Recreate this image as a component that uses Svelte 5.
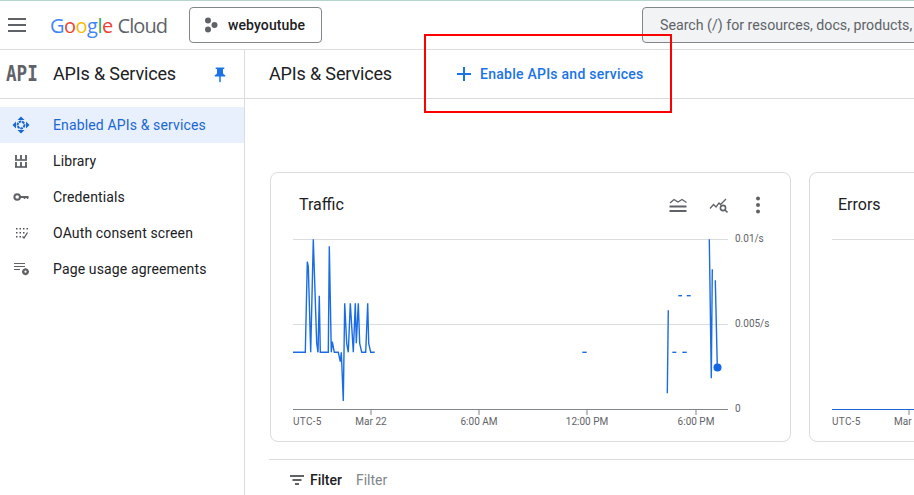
<script>
  const z = (ox, pts) => pts.map(([x, y]) => `${(ox + x / 3).toFixed(1)},${(170 + y / 3).toFixed(1)}`).join(' ');
  const main = z(270, [[69,547],[106,547],[112,275],[115,290],[122,547],[130,208],[140,520],[144,547],[148,377],[151,547],[175,547],[178,229],[184,547],[187,515],[193,547],[205,547],[211,575],[214,547],[220,693],[224,400],[230,520],[235,547],[241,400],[250,547],[256,400],[259,520],[265,400],[269,520],[275,547],[287,547],[293,400],[296,520],[302,547],[314,547]]);
  const segments = [
    [[67,547],[80,547]],
    [[325,421],[322,670]],
    [[355,377],[366,377]],
    [[380,377],[392,377]],
    [[337,547],[349,547]],
    [[367,547],[380,547]],
    [[448,208],[454,625],[457,298]],
    [[466,331],[472,592]]
  ].map((s) => z(560, s));
  const ticks = [
    { x: 371, label: 'Mar 22' },
    { x: 479, label: '6:00 AM' },
    { x: 587, label: '12:00 PM' },
    { x: 696, label: '6:00 PM' }
  ];
  const nav = ['Library', 'Credentials', 'OAuth consent screen', 'Page usage agreements'];
</script>

<div class="page">
  <div class="topline"></div>
  <header class="topbar">
    <svg class="menu" width="18" height="14" viewBox="0 0 18 14"><path d="M0 1h18M0 7h18M0 13h18" stroke="#5f6368" stroke-width="2" /></svg>
    <div class="logo"><span class="b">G</span><span class="r">o</span><span class="y">o</span><span class="b">g</span><span class="g">l</span><span class="r">e</span> <span class="cloud">Cloud</span></div>
    <button class="project">
      <svg width="14" height="16" viewBox="0 0 14 16"><circle cx="4" cy="3.5" r="3" fill="#5f6368" /><circle cx="10.5" cy="8" r="3" fill="#5f6368" /><circle cx="4" cy="12.5" r="3" fill="#5f6368" /></svg>
      <span>webyoutube</span>
    </button>
    <div class="search">Search (/) for resources, docs, products, and more</div>
  </header>

  <div class="body">
    <aside class="side">
      <div class="side-head">
        <span class="api">API</span>
        <span class="title">APIs &amp; Services</span>
        <svg class="pin" width="18" height="18" viewBox="0 0 24 24"><path fill="#1a73e8" d="M16 9V4h1c.55 0 1-.45 1-1s-.45-1-1-1H7c-.55 0-1 .45-1 1s.45 1 1 1h1v5c0 1.66-1.34 3-3 3v2h5.97v7l1 1 1-1v-7H19v-2c-1.66 0-3-1.34-3-3z" /></svg>
      </div>
      <nav>
        <div class="item active">
          <svg width="18" height="18" viewBox="0 0 18 18" fill="#1967d2">
            <path d="M9 .5 12.500 4H5.500zM9 17.500 5.500 14h7zM.5 9 4 5.500v7zM17.500 9 14 12.500v-7z" />
            <circle cx="9" cy="9" r="3.400" fill="none" stroke="#1967d2" stroke-width="2" stroke-dasharray="2.600 .74" />
          </svg>
          <span>Enabled APIs &amp; services</span>
        </div>
        {#each nav as label, i}
          <div class="item">
            {#if i === 0}
              <svg width="18" height="18" viewBox="0 0 18 18"><path d="M4 3v4.500M9 3v4.500M14 3v4.500M4 10v5M9 10v5M14 10v5" stroke="#4f5358" stroke-width="1.700" /><path d="M3 8h12M3 15h12" stroke="#4f5358" stroke-width="1.500" /></svg>
            {:else if i === 1}
              <svg width="18" height="18" viewBox="0 0 18 18"><circle cx="5.200" cy="9" r="2.800" fill="none" stroke="#5f6368" stroke-width="2" /><path d="M8 9h8.500" stroke="#5f6368" stroke-width="2" /><path d="M12.500 9v2M15.500 9v2" stroke="#5f6368" stroke-width="1.500" /></svg>
            {:else if i === 2}
              <svg width="18" height="18" viewBox="0 0 18 18" fill="#4f5358"><path d="M4 4h1.500v1.500H4zM7.500 4H9v1.500H7.500zM11 4h1.500v1.500H11zM14.500 4H16v1.500h-1.500zM4 8h1.500v1.500H4zM7.500 8H9v1.500H7.500zM11 8h1.500v1.500H11zM4 12h1.500v1.500H4zM7.500 12H9v1.500H7.500z" /><path d="M10.500 12.500 12 14 15.500 8.500" fill="none" stroke="#4f5358" stroke-width="1.200" /></svg>
            {:else}
              <svg width="18" height="18" viewBox="0 0 18 18"><path d="M2 3.500h11M2 6.500h11M2 9.500h6" stroke="#5f6368" stroke-width="1.200" /><circle cx="13.500" cy="11.700" r="2.200" fill="none" stroke="#5f6368" stroke-width="2.200" /><path d="M13.500 8.200v1.500M13.500 13.700v1.500M10 11.700h1.200M15.800 11.700H17" stroke="#5f6368" stroke-width="1.600" /></svg>
            {/if}
            <span>{label}</span>
          </div>
        {/each}
      </nav>
    </aside>

    <main class="main">
      <div class="main-head">
        <span class="title">APIs &amp; Services</span>
        <div class="enable">
          <svg width="14" height="14" viewBox="0 0 14 14"><path d="M7 0v14M0 7h14" stroke="#1a73e8" stroke-width="2" /></svg>
          <span>Enable APIs and services</span>
        </div>
      </div>

      <div class="cards">
        <section class="card">
          <div class="card-head">
            <h2>Traffic</h2>
            <div class="tools">
              <svg width="24" height="24" viewBox="0 0 24 24" fill="none" stroke="#5f6368"><path d="M4 10 8 6.500l4 2.500 4-2.500 4.500 3" stroke-width="1.300" /><path d="M3.500 13.500h17M3.500 18h17" stroke-width="2" /></svg>
              <svg width="24" height="24" viewBox="0 0 24 24" fill="none" stroke="#5f6368" stroke-width="1.300"><path d="M4 15.500 7.500 11.500 10 14 13 10l1.500 1.500L20 6" /><circle cx="17" cy="15" r="2.600" stroke-width="1.600" /><path d="M19 17l2.500 2.500" stroke-width="1.600" /></svg>
              <svg width="24" height="24" viewBox="0 0 24 24" fill="#5f6368"><circle cx="12" cy="5.500" r="2" /><circle cx="12" cy="12" r="2" /><circle cx="12" cy="18.500" r="2" /></svg>
            </div>
          </div>
          <svg class="chart" width="521" height="209" viewBox="270 232 521 209">
            <path d="M293 239.500H728M293 324.500H728" stroke="#dadce0" stroke-width="1" />
            <path d="M293 409.500H728" stroke="#80868b" stroke-width="1" />
            {#each ticks as t}
              <path d="M{t.x} 410v5" stroke="#80868b" stroke-width="1" />
              <text x={t.x} y="425" text-anchor="middle">{t.label}</text>
            {/each}
            <text class="tz" x="293" y="425">UTC-5</text>
            <text x="735" y="242">0.01/s</text>
            <text x="735" y="327">0.005/s</text>
            <text x="735" y="412">0</text>
            <polyline points={main} class="line" />
            {#each segments as s}
              <polyline points={s} class="line" />
            {/each}
            <circle cx="717.500" cy="367.500" r="4" fill="#1267e4" />
          </svg>
        </section>

        <section class="card">
          <div class="card-head"><h2>Errors</h2></div>
          <svg class="chart" width="521" height="209" viewBox="809 232 521 209">
            <path d="M832 239.500H1267" stroke="#dadce0" stroke-width="1" />
            <path d="M832 409.500H1267" stroke="#1967d2" stroke-width="1.200" />
            <path d="M909 410v5" stroke="#80868b" stroke-width="1" />
            <text class="tz" x="832" y="425">UTC-5</text>
            <text x="894" y="425">Mar</text>
          </svg>
        </section>
      </div>

      <div class="filter">
        <svg width="14" height="10" viewBox="0 0 14 10"><path d="M0 1h14M2.500 5h9M5 9h4" stroke="#5f6368" stroke-width="1.800" /></svg>
        <strong>Filter</strong>
        <span>Filter</span>
      </div>

      <div class="callout"></div>
    </main>
  </div>
</div>

<style>
  :global(body) {
    margin: 0;
    overflow: hidden;
    background: #fff;
  }
  .page {
    width: 914px;
    height: 495px;
    overflow: hidden;
    font-family: Roboto, "Liberation Sans", sans-serif;
    color: #202124;
    display: flex;
    flex-direction: column;
  }
  .topline {
    height: 1px;
    background: #b9d3ce;
    flex: none;
  }
  .topbar {
    height: 48px;
    border-bottom: 1px solid #dadce0;
    flex: none;
    display: flex;
    align-items: center;
    white-space: nowrap;
  }
  .topbar > * {
    flex: none;
  }
  .menu {
    margin-left: 8px;
  }
  .logo {
    margin-left: 24px;
    font-family: "Open Sans", sans-serif;
    font-size: 20px;
    letter-spacing: -0.5px;
    width: 139px;
    margin-top: 1px;
  }
  .b { color: #4285f4; }
  .r { color: #ea4335; }
  .y { color: #fbbc04; }
  .g { color: #34a853; }
  .cloud { color: #5f6368; letter-spacing: -0.9px; }
  .project {
    width: 133px;
    height: 36px;
    box-sizing: border-box;
    border: 1px solid #80868b;
    border-radius: 4px;
    background: #fff;
    display: flex;
    align-items: center;
    gap: 10px;
    padding: 0 0 0 14px;
    font: 500 14px Roboto, sans-serif;
    letter-spacing: 0.1px;
    color: #202124;
  }
  .search {
    margin-left: 320px;
    width: 400px;
    height: 36px;
    box-sizing: border-box;
    border: 1px solid #80868b;
    border-radius: 4px;
    background: #f1f3f4;
    padding-left: 17px;
    font-size: 14.200px;
    line-height: 34px;
    color: #5f6368;
  }
  .body {
    flex: 1;
    display: flex;
    min-height: 0;
  }
  .side {
    width: 245px;
    flex: none;
    box-sizing: border-box;
    border-right: 1px solid #dadce0;
  }
  .side-head {
    height: 48px;
    border-bottom: 1px solid #dadce0;
    display: flex;
    align-items: center;
  }
  .api {
    font: 700 22px "DejaVu Sans Mono", monospace;
    color: #5f6368;
    margin: 0 0 2px 6px;
    width: 47px;
    flex: none;
    transform: scaleX(0.8);
    transform-origin: left center;
  }
  .title {
    font-size: 18px;
    letter-spacing: -0.15px;
    color: #202124;
    margin-bottom: 2px;
  }
  .pin {
    margin: 2px 0 0 35px;
  }
  nav {
    padding-top: 8px;
  }
  .item {
    height: 36px;
    display: flex;
    align-items: center;
    padding-left: 12px;
    gap: 23px;
    font-size: 14px;
    letter-spacing: 0.14px;
    color: #202124;
  }
  .item.active {
    background: #e8f0fe;
    color: #1967d2;
  }
  .main {
    flex: 1;
    min-width: 0;
    position: relative;
  }
  .main-head {
    height: 48px;
    border-bottom: 1px solid #dadce0;
    display: flex;
    align-items: center;
    padding-left: 24px;
  }
  .enable {
    margin-left: 65px;
    display: flex;
    align-items: center;
    gap: 9px;
    color: #1a73e8;
    font-size: 14px;
    font-weight: 500;
    letter-spacing: 0.25px;
    white-space: nowrap;
  }
  .cards {
    display: flex;
    gap: 18px;
    margin: 73px 0 0 25px;
  }
  .card {
    width: 521px;
    height: 270px;
    flex: none;
    box-sizing: border-box;
    border: 1px solid #dadce0;
    border-radius: 8px;
    overflow: hidden;
  }
  .card-head {
    height: 59px;
    box-sizing: border-box;
    display: flex;
    align-items: center;
    padding: 4px 0 0 28px;
  }
  h2 {
    margin: 0;
    font-size: 16px;
    font-weight: 400;
    color: #202124;
  }
  .tools {
    margin-left: auto;
    display: flex;
    gap: 16px;
    padding-right: 20px;
  }
  .chart {
    display: block;
    margin-left: -1px;
  }
  .chart text {
    font-size: 10px;
    fill: #5f6368;
  }
  .chart text.tz {
    letter-spacing: 0.3px;
  }
  .line {
    fill: none;
    stroke: #1a6ce4;
    stroke-width: 1.400;
  }
  .filter {
    margin: 17px 0 0 24px;
    border-top: 1px solid #dadce0;
    padding: 12px 0 0 21px;
    display: flex;
    align-items: center;
    font-size: 14px;
  }
  .filter strong {
    font-weight: 500;
    margin-left: 6px;
    color: #202124;
  }
  .filter span {
    margin-left: 14px;
    color: #80868b;
  }
  .callout {
    position: absolute;
    left: 179px;
    top: -16px;
    width: 248px;
    height: 79px;
    box-sizing: border-box;
    border: 2px solid #f00;
  }
</style>
